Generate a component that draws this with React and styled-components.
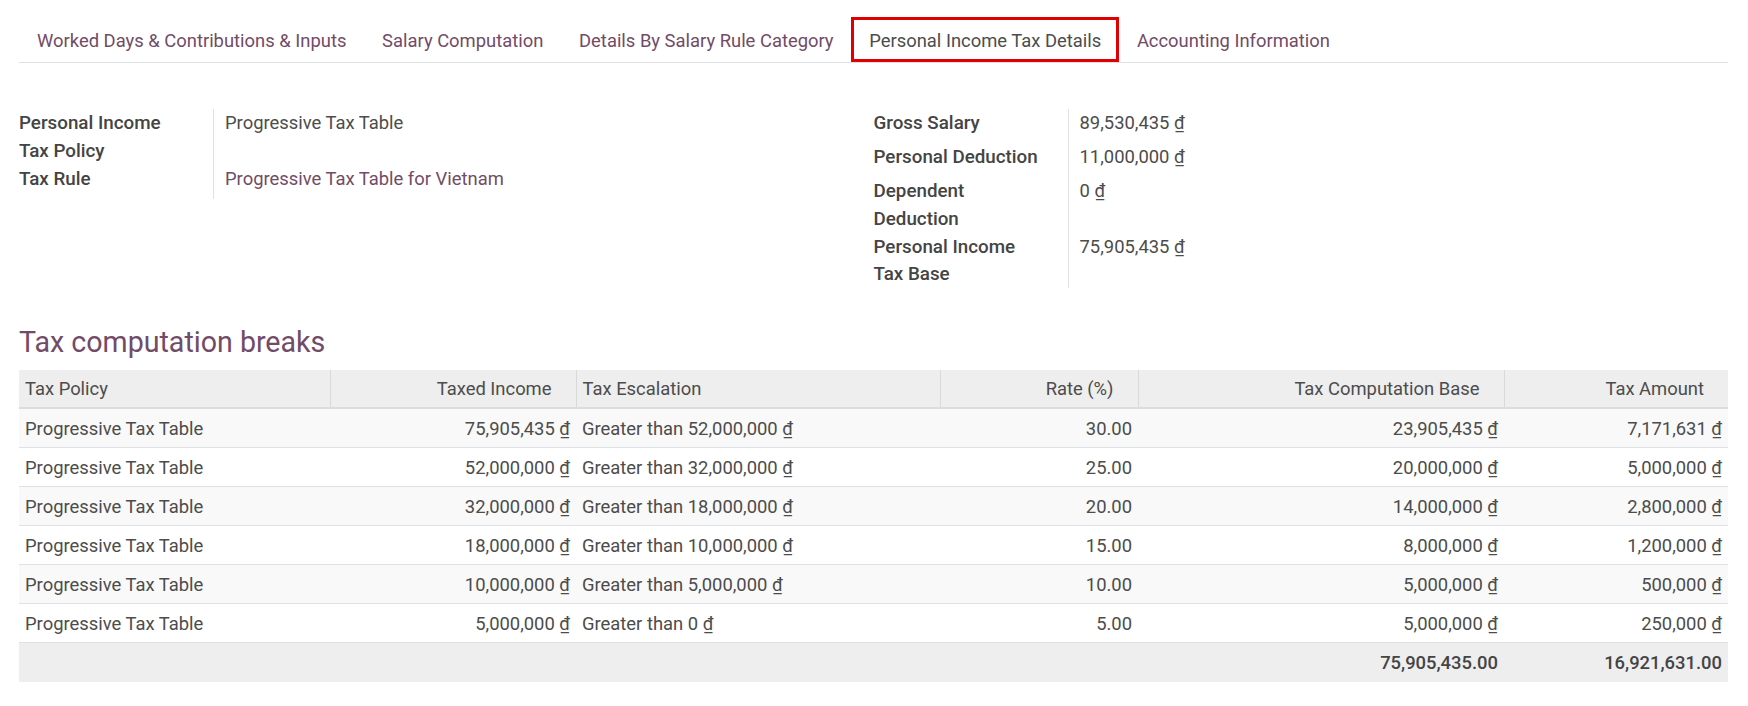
import React from "react";
import styled, { createGlobalStyle } from "styled-components";

const GlobalStyle = createGlobalStyle`
  body {
    margin: 0;
    background: #fff;
    font-family: Roboto, "Noto Sans", "Liberation Sans", sans-serif;
    font-size: 18.4px;
    line-height: 27.3px;
    color: #4c4c4c;
  }
`;

const PURPLE = "#714b67";

const Page = styled.div`
  width: 1748px;
  box-sizing: border-box;
  padding: 17px 20px 0 19px;
`;

const Tabs = styled.ul`
  display: flex;
  margin: 0;
  padding: 0;
  list-style: none;
  border-bottom: 1px solid #dee2e6;
`;

const Tab = styled.li`
  padding: 10px 17.7px 8px 18px;
  color: ${(props) => (props.active ? "#4c4c4c" : PURPLE)};
  box-shadow: ${(props) => (props.active ? "inset 0 0 0 3px #e00000" : "none")};
  white-space: nowrap;
`;

const InfoGrid = styled.div`
  display: grid;
  grid-template-columns: 1fr 1fr;
  margin-top: 46px;
`;

const FieldGroup = styled.div`
  display: grid;
  grid-template-columns: 194px 1fr;
  align-content: start;
`;

const Label = styled.div`
  padding-top: 1px;
  padding-right: 22px;
  font-weight: 500;
  font-size: 18.8px;
  color: #444;
`;

const Value = styled.div`
  min-height: 34px;
  padding-left: 11px;
  border-left: 1px solid #dee2e6;
  color: ${(props) => (props.link ? PURPLE : "#4c4c4c")};
`;

const Title = styled.h2`
  margin: 33px 0 0;
  font-size: 28.6px;
  line-height: 42px;
  font-weight: 400;
  color: ${PURPLE};
`;

const Table = styled.table`
  width: 100%;
  margin-top: 7px;
  border-collapse: collapse;
  table-layout: fixed;
`;

const Th = styled.th`
  height: 37px;
  padding: 0 ${(props) => (props.right ? "24px" : "6px")} 0 6px;
  text-align: ${(props) => (props.right ? "right" : "left")};
  font-weight: 400;
  color: #4c4c4c;
  background: #eeeeee;
  border-bottom: 2px solid #dcdcdc;
  & + & {
    border-left: 1px solid #d9d9d9;
  }
`;

const Row = styled.tr`
  &:nth-child(odd) {
    background: #f9f9f9;
  }
`;

const Td = styled.td`
  height: 38px;
  padding: 0 6px;
  text-align: ${(props) => (props.right ? "right" : "left")};
  border-bottom: 1px solid #dee2e6;
  white-space: nowrap;
`;

const FootTd = styled.td`
  height: 39px;
  padding: 0 6px;
  text-align: right;
  font-weight: 500;
  color: #444;
  background: #eeeeee;
`;

const Money = ({ value }) => (
  <>
    {value} <span>₫</span>
  </>
);

const tabs = [
  "Worked Days & Contributions & Inputs",
  "Salary Computation",
  "Details By Salary Rule Category",
  "Personal Income Tax Details",
  "Accounting Information",
];

const rows = [
  ["75,905,435", "52,000,000", "30.00", "23,905,435", "7,171,631"],
  ["52,000,000", "32,000,000", "25.00", "20,000,000", "5,000,000"],
  ["32,000,000", "18,000,000", "20.00", "14,000,000", "2,800,000"],
  ["18,000,000", "10,000,000", "15.00", "8,000,000", "1,200,000"],
  ["10,000,000", "5,000,000", "10.00", "5,000,000", "500,000"],
  ["5,000,000", "0", "5.00", "5,000,000", "250,000"],
];

const App = () => {
  return (
    <>
      <GlobalStyle />
      <Page>
        <Tabs>
          {tabs.map((t, i) => (
            <Tab key={t} active={i === 3}>
              {t}
            </Tab>
          ))}
        </Tabs>

        <InfoGrid>
          <FieldGroup>
            <Label>Personal Income Tax Policy</Label>
            <Value>Progressive Tax Table</Value>
            <Label>Tax Rule</Label>
            <Value link>Progressive Tax Table for Vietnam</Value>
          </FieldGroup>
          <FieldGroup>
            <Label>Gross Salary</Label>
            <Value>
              <Money value="89,530,435" />
            </Value>
            <Label>Personal Deduction</Label>
            <Value>
              <Money value="11,000,000" />
            </Value>
            <Label>Dependent Deduction</Label>
            <Value>
              <Money value="0" />
            </Value>
            <Label>Personal Income Tax Base</Label>
            <Value>
              <Money value="75,905,435" />
            </Value>
          </FieldGroup>
        </InfoGrid>

        <Title>Tax computation breaks</Title>

        <Table>
          <colgroup>
            <col style={{ width: 311 }} />
            <col style={{ width: 246 }} />
            <col style={{ width: 364 }} />
            <col style={{ width: 198 }} />
            <col style={{ width: 366 }} />
            <col style={{ width: 224 }} />
          </colgroup>
          <thead>
            <tr>
              <Th>Tax Policy</Th>
              <Th right>Taxed Income</Th>
              <Th>Tax Escalation</Th>
              <Th right>Rate (%)</Th>
              <Th right>Tax Computation Base</Th>
              <Th right>Tax Amount</Th>
            </tr>
          </thead>
          <tbody>
            {rows.map((r) => (
              <Row key={r[0]}>
                <Td>Progressive Tax Table</Td>
                <Td right>
                  <Money value={r[0]} />
                </Td>
                <Td>
                  Greater than <Money value={r[1]} />
                </Td>
                <Td right>{r[2]}</Td>
                <Td right>
                  <Money value={r[3]} />
                </Td>
                <Td right>
                  <Money value={r[4]} />
                </Td>
              </Row>
            ))}
          </tbody>
          <tfoot>
            <tr>
              <FootTd />
              <FootTd />
              <FootTd />
              <FootTd />
              <FootTd>75,905,435.00</FootTd>
              <FootTd>16,921,631.00</FootTd>
            </tr>
          </tfoot>
        </Table>
      </Page>
    </>
  );
};

export default App;
